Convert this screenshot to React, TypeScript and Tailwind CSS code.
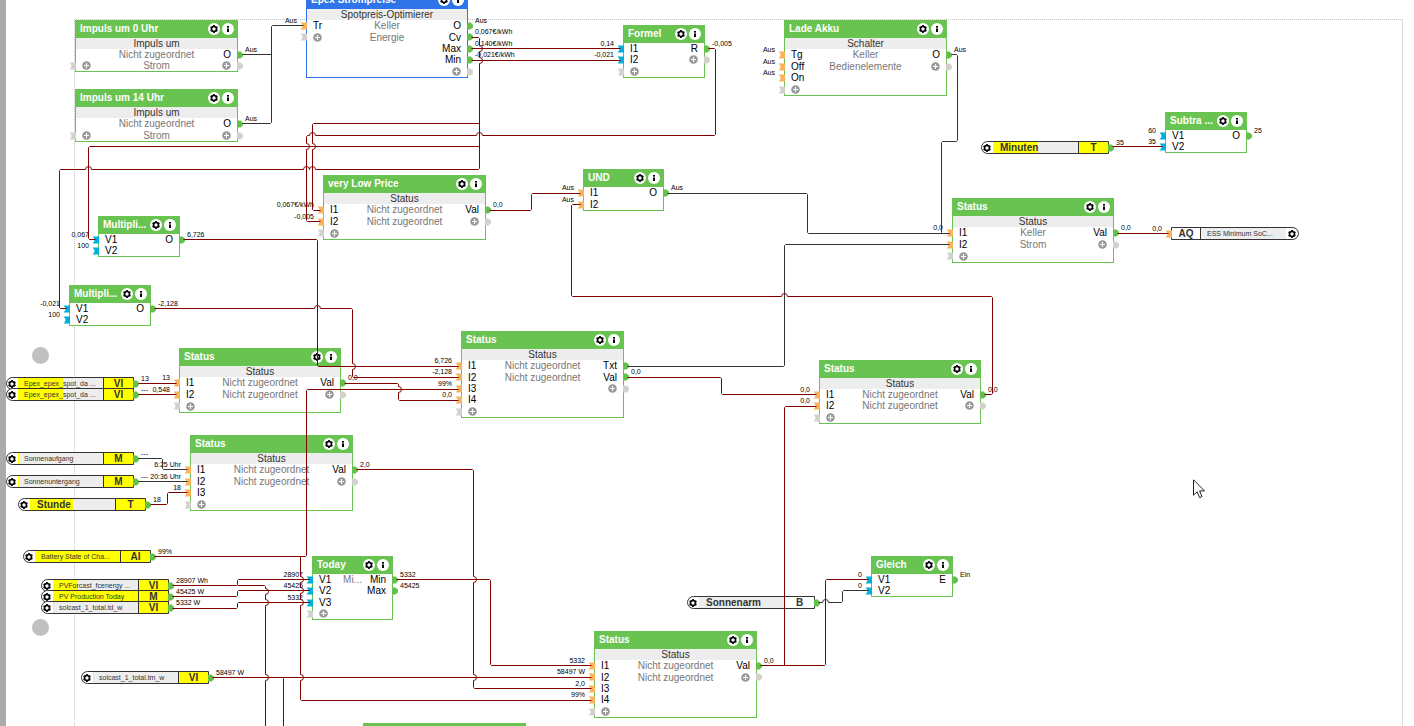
import React from "react";

type PortKind = "orange" | "cyan" | "gray";
type Input = { label?: string; kind: PortKind; value?: string };
type Output = { label?: string; value?: string };
type Row = { in?: Input; mid?: string; out?: Output };
type Block = {
  x: number;
  y: number;
  w: number;
  h: number;
  title: string;
  type?: string;
  blue?: boolean;
  rows: Row[];
};
type Tag = {
  x: number;
  y: number;
  name: string;
  code: string;
  fill?: number;
  small?: boolean;
  plain?: boolean;
  value?: string;
};
type Point = [number, number];
type Wire = { points: Point[]; dark?: boolean; hops?: Point[] };

const o = (label: string, value?: string): Input => ({ label, kind: "orange", value });
const c = (label: string, value?: string): Input => ({ label, kind: "cyan", value });
const add: Input = { kind: "gray" };
const out = (label: string, value?: string): Output => ({ label, value });
const addOut: Output = {};
const NONE = "Nicht zugeordnet";

const blocks: Block[] = [
  { x: 75, y: 20, w: 163, h: 52, title: "Impuls um 0 Uhr", type: "Impuls um", rows: [{ mid: NONE, out: out("O", "Aus") }, { in: add, mid: "Strom", out: addOut }] },
  { x: 75, y: 89, w: 163, h: 53, title: "Impuls um 14 Uhr", type: "Impuls um", rows: [{ mid: NONE, out: out("O", "Aus") }, { in: add, mid: "Strom", out: addOut }] },
  {
    x: 306, y: -9, w: 162, h: 87, title: "Epex Strompreise", type: "Spotpreis-Optimierer", blue: true,
    rows: [
      { in: o("Tr", "Aus"), mid: "Keller", out: out("O", "Aus") },
      { in: add, mid: "Energie", out: out("Cv", "0,067€/kWh") },
      { out: out("Max", "0,140€/kWh") },
      { out: out("Min", "-0,021€/kWh") },
      { out: addOut },
    ],
  },
  { x: 623, y: 25, w: 82, h: 53, title: "Formel", rows: [{ in: c("I1", "0,14"), out: out("R", "-0,005") }, { in: c("I2", "-0,021"), out: addOut }, { in: add }] },
  {
    x: 784, y: 20, w: 163, h: 76, title: "Lade Akku", type: "Schalter",
    rows: [{ in: o("Tg", "Aus"), mid: "Keller", out: out("O", "Aus") }, { in: o("Off", "Aus"), mid: "Bedienelemente", out: addOut }, { in: o("On", "Aus") }, { in: add }],
  },
  { x: 1165, y: 112, w: 82, h: 41, title: "Subtra ...", rows: [{ in: c("V1", "60"), out: out("O", "25") }, { in: c("V2", "35") }] },
  { x: 952, y: 198, w: 162, h: 65, title: "Status", type: "Status", rows: [{ in: o("I1", "0,0"), mid: "Keller", out: out("Val", "0,0") }, { in: o("I2"), mid: "Strom", out: addOut }, { in: add }] },
  { x: 323, y: 175, w: 163, h: 65, title: "very Low Price", type: "Status", rows: [{ in: o("I1", "0,067€/kWh"), mid: NONE, out: out("Val", "0,0") }, { in: o("I2", "-0,005"), mid: NONE, out: addOut }, { in: add }] },
  { x: 583, y: 169, w: 81, h: 42, title: "UND", rows: [{ in: o("I1", "Aus"), out: out("O", "Aus") }, { in: o("I2", "Aus") }] },
  { x: 98, y: 216, w: 82, h: 41, title: "Multipli...", rows: [{ in: c("V1", "0,067"), out: out("O", "6,726") }, { in: c("V2", "100") }] },
  { x: 69, y: 285, w: 82, h: 41, title: "Multipli...", rows: [{ in: c("V1", "-0,021"), out: out("O", "-2,128") }, { in: c("V2", "100") }] },
  { x: 179, y: 348, w: 162, h: 65, title: "Status", type: "Status", rows: [{ in: o("I1", "13"), mid: NONE, out: out("Val", "0,0") }, { in: o("I2", "0,548"), mid: NONE, out: addOut }, { in: add }] },
  {
    x: 461, y: 331, w: 163, h: 87, title: "Status", type: "Status",
    rows: [{ in: o("I1", "6,726"), mid: NONE, out: out("Txt") }, { in: o("I2", "-2,128"), mid: NONE, out: out("Val", "0,0") }, { in: o("I3", "99%"), out: addOut }, { in: o("I4", "0,0") }, { in: add }],
  },
  { x: 819, y: 360, w: 162, h: 64, title: "Status", type: "Status", rows: [{ in: o("I1", "0,0"), mid: NONE, out: out("Val", "0,0") }, { in: o("I2", "0,0"), mid: NONE, out: addOut }, { in: add }] },
  {
    x: 190, y: 435, w: 163, h: 76, title: "Status", type: "Status",
    rows: [{ in: o("I1", "6:25 Uhr"), mid: NONE, out: out("Val", "2,0") }, { in: o("I2", "20:36 Uhr"), mid: NONE, out: addOut }, { in: o("I3", "18") }, { in: add }],
  },
  { x: 312, y: 556, w: 81, h: 64, title: "Today", rows: [{ in: c("V1", "28907"), mid: "Mi...", out: out("Min", "5332") }, { in: c("V2", "45425"), out: out("Max", "45425") }, { in: c("V3", "5332") }, { in: add }] },
  { x: 871, y: 556, w: 82, h: 41, title: "Gleich", rows: [{ in: c("V1", "0"), out: out("E", "Ein") }, { in: c("V2", "0") }] },
  {
    x: 594, y: 631, w: 163, h: 87, title: "Status", type: "Status",
    rows: [{ in: o("I1", "5332"), mid: NONE, out: out("Val", "0,0") }, { in: o("I2", "58497 W"), mid: NONE, out: addOut }, { in: o("I3", "2,0") }, { in: o("I4", "99%") }, { in: add }],
  },
  { x: 363, y: 723, w: 163, h: 52, title: "", rows: [] },
];

const tags: Tag[] = [
  { x: 6, y: 377, name: "Epex_epex_spot_da ...", code: "VI", fill: 45, small: true, value: "13" },
  { x: 6, y: 388, name: "Epex_epex_spot_da ...", code: "VI", fill: 45, small: true, value: "---" },
  { x: 6, y: 452, name: "Sonnenaufgang", code: "M", fill: 1, small: true, value: "---" },
  { x: 6, y: 475, name: "Sonnenuntergang", code: "M", fill: 1, small: true, value: "---" },
  { x: 18, y: 498, name: "Stunde", code: "T", fill: 43, value: "18" },
  { x: 23, y: 550, name: "Battery State of Cha...", code: "AI", fill: 86, small: true, value: "99%" },
  { x: 41, y: 579, name: "PVForcast_fcenergy ...", code: "VI", fill: 25, small: true, value: "28907 Wh" },
  { x: 41, y: 590, name: "PV Production Today", code: "M", fill: 86, small: true, value: "45425 W" },
  { x: 41, y: 601, name: "solcast_1_total.td_w", code: "VI", fill: 1, small: true, value: "5332 W" },
  { x: 81, y: 671, name: "solcast_1_total.tm_w", code: "VI", fill: 1, small: true, value: "58497 W" },
  { x: 981, y: 141, name: "Minuten", code: "T", fill: 45, value: "35" },
  { x: 687, y: 596, name: "Sonnenarm", code: "B", plain: true },
];

const wires: Wire[] = [
  { dark: true, points: [[242, 54], [271, 54]] },
  { dark: true, points: [[242, 123], [271, 123], [271, 25], [303, 25]] },
  { dark: true, points: [[951, 54], [957, 54], [957, 141], [941, 141], [941, 233], [949, 233]] },
  { dark: true, points: [[667, 193], [807, 193], [807, 233], [949, 233]] },
  { dark: true, points: [[627, 366], [784, 366], [784, 244], [949, 244]] },
  { dark: true, points: [[138, 458], [162, 458], [162, 469], [187, 469]] },
  { dark: true, points: [[138, 481], [187, 481]] },
  { dark: true, points: [[818, 602], [842, 602], [842, 590], [868, 590]], hops: [[825, 602]] },
  { points: [[471, 37], [479, 37], [479, 169], [59, 169], [59, 308], [66, 308]], hops: [[479, 48], [479, 60], [312, 169], [306, 169], [88, 169]] },
  { points: [[479, 123], [312, 123], [312, 210], [320, 210]], hops: [[312, 146]] },
  { points: [[479, 146], [88, 146], [88, 239], [95, 239]] },
  { points: [[471, 48], [620, 48]] },
  { points: [[471, 60], [620, 60]] },
  { points: [[708, 48], [715, 48], [715, 135], [306, 135], [306, 221], [320, 221]], hops: [[479, 135], [312, 135], [306, 146]] },
  { points: [[183, 239], [317, 239], [317, 366], [458, 366]] },
  { points: [[154, 308], [352, 308], [352, 377], [458, 377]], hops: [[317, 308], [352, 366]] },
  { points: [[344, 383], [398, 383], [398, 400], [458, 400]], hops: [[398, 389]] },
  { points: [[154, 556], [306, 556], [306, 389], [458, 389]] },
  { points: [[300, 556], [300, 700], [591, 700]], hops: [[300, 579], [300, 590], [300, 602], [300, 677]] },
  { points: [[138, 383], [176, 383]] },
  { points: [[138, 394], [176, 394]] },
  { points: [[150, 504], [167, 504], [167, 492], [187, 492]] },
  { points: [[489, 210], [531, 210], [531, 193], [580, 193]] },
  { points: [[580, 204], [571, 204], [571, 296], [992, 296], [992, 394], [984, 394]], hops: [[784, 296]] },
  { points: [[627, 377], [721, 377], [721, 394], [816, 394]] },
  { points: [[816, 406], [784, 406], [784, 665]] },
  { points: [[760, 665], [825, 665], [825, 579], [868, 579]] },
  { points: [[356, 469], [473, 469], [473, 688], [591, 688]], hops: [[473, 579], [473, 677]] },
  { points: [[396, 579], [490, 579], [490, 665], [591, 665]] },
  { points: [[212, 677], [591, 677]] },
  { points: [[275, 677], [283, 677], [283, 780]] },
  { points: [[172, 585], [237, 585], [237, 579], [309, 579]] },
  { points: [[237, 585], [265, 585], [265, 780]], hops: [[265, 591], [265, 602], [265, 677]] },
  { points: [[172, 596], [237, 596], [237, 590], [309, 590]] },
  { points: [[172, 608], [237, 608], [237, 602], [309, 602]] },
  { points: [[1112, 146], [1162, 146]] },
  { points: [[1117, 233], [1168, 233]] },
];

/* Builds a path with chamfered corners and small arcs where it jumps another wire. */
function wirePath({ points, hops = [] }: Wire): string {
  const d: string[] = [`M${points[0][0]} ${points[0][1]}`];
  for (let i = 0; i < points.length - 1; i++) {
    const [ax, ay] = points[i];
    const [bx, by] = points[i + 1];
    const dx = Math.sign(bx - ax);
    const dy = Math.sign(by - ay);
    if (i > 0) d.push(`L${ax + dx} ${ay + dy}`);
    const onSegment = hops
      .filter(([hx, hy]) =>
        dx !== 0
          ? hy === ay && (hx - ax) * dx > 0 && (bx - hx) * dx > 0
          : hx === ax && (hy - ay) * dy > 0 && (by - hy) * dy > 0
      )
      .sort((p, q) => (p[0] - q[0]) * dx + (p[1] - q[1]) * dy);
    const sweep = dx > 0 || dy > 0 ? 1 : 0;
    for (const [hx, hy] of onSegment) {
      d.push(`L${hx - dx * 3} ${hy - dy * 3}`);
      d.push(`A3 3 0 0 ${sweep} ${hx + dx * 3} ${hy + dy * 3}`);
    }
    const trim = i < points.length - 2 ? 1 : 0;
    d.push(`L${bx - dx * trim} ${by - dy * trim}`);
  }
  return d.join("");
}

function Gear() {
  return (
    <svg viewBox="0 0 12 12" className="block size-3" aria-hidden="true">
      <g stroke="#000" fill="none">
        <circle cx="6" cy="6" r="2.5" strokeWidth="1.6" />
        <path d="M6 2.1v1.2M6 8.7v1.2M2.6 4.05l1.1.6M8.3 7.35l1.1.6M2.6 7.95l1.1-.6M8.3 4.65l1.1-.6" strokeWidth="1.7" />
      </g>
    </svg>
  );
}

function Info() {
  return (
    <svg viewBox="0 0 12 12" className="block size-3" aria-hidden="true">
      <rect x="5" y="3" width="2" height="1.6" fill="#000" />
      <rect x="5" y="5.4" width="2" height="3.6" fill="#000" />
    </svg>
  );
}

function Plus() {
  return (
    <svg viewBox="0 0 9 9" className="block size-[9px]" aria-hidden="true">
      <circle cx="4.5" cy="4.5" r="4.3" fill="#999" />
      <path d="M4.5 2v5M2 4.5h5" stroke="#fff" strokeWidth="1.1" />
    </svg>
  );
}

const portFill: Record<PortKind, string> = { orange: "#f9b35a", cyan: "#00b0dc", gray: "#d3d1cc" };

function InPort({ kind }: { kind: PortKind }) {
  return (
    <svg viewBox="0 0 7 8" className="absolute right-full top-[2px] h-2 w-[7px]" aria-hidden="true">
      <path d="M0.6 0.4H7V7.6H0.6L2.4 5V3Z" fill={portFill[kind]} />
    </svg>
  );
}

function OutPort({ muted }: { muted?: boolean }) {
  return (
    <svg viewBox="0 0 6 8" className="absolute left-full top-[2px] h-2 w-[6px]" aria-hidden="true">
      <path d="M0 0.5H3.6L6 2.8V5.2L3.6 7.5H0Z" fill={muted ? "#d3d1cc" : "#62c04b"} />
    </svg>
  );
}

function Value({ children, side }: { children: string; side: "in" | "out" }) {
  return (
    <span
      className={
        side === "in"
          ? "absolute right-full -top-[3px] mr-[10px] whitespace-nowrap text-[7px] leading-[8px] text-black"
          : "absolute left-full -top-[3px] ml-2 whitespace-nowrap text-[7px] leading-[8px] text-black"
      }
    >
      {children}
    </span>
  );
}

function BlockRow({ row }: { row: Row }) {
  return (
    <div className="relative grid min-h-0 flex-1 grid-cols-[1fr_auto_1fr] items-center px-[6px] leading-[11px]">
      <span className="flex text-black">{row.in && (row.in.label ?? <Plus />)}</span>
      <span className="whitespace-nowrap text-[#777]">{row.mid}</span>
      <span className="flex justify-end text-black">{row.out && (row.out.label ?? <Plus />)}</span>
      {row.in && <InPort kind={row.in.kind} />}
      {row.in?.value && <Value side="in">{row.in.value}</Value>}
      {row.out && <OutPort muted={!row.out.label} />}
      {row.out?.value && <Value side="out">{row.out.value}</Value>}
    </div>
  );
}

function BlockCard({ block }: { block: Block }) {
  const { x, y, w, h, title, type, blue, rows } = block;
  return (
    <section
      className={`absolute flex flex-col border bg-white text-[10px] ${blue ? "border-[#2f74e8]" : "border-[#69c350]"}`}
      style={{ left: x, top: y, width: w, height: h }}
    >
      <header className={`flex h-[17px] shrink-0 items-center justify-between pb-px pl-1 pr-[3px] ${blue ? "bg-[#2f74e8]" : "bg-[#69c350]"}`}>
        <h2 className="whitespace-nowrap pb-px font-bold leading-3 text-white">{title}</h2>
        <div className="flex shrink-0 gap-[2px]">
          <button type="button" aria-label="Einstellungen" className="size-3 rounded-full bg-white">
            <Gear />
          </button>
          <button type="button" aria-label="Info" className="size-3 rounded-full bg-white">
            <Info />
          </button>
        </div>
      </header>
      {type && <p className="h-[11px] shrink-0 bg-[#ededed] text-center leading-[11px] text-[#333]">{type}</p>}
      <div className="flex min-h-0 flex-1 flex-col">
        {rows.map((row, i) => (
          <BlockRow key={i} row={row} />
        ))}
      </div>
    </section>
  );
}

function TagPill({ tag }: { tag: Tag }) {
  return (
    <div
      className="absolute flex h-[13px] w-32 rounded-l-full border border-[#333] bg-white text-[#333]"
      style={{ left: tag.x, top: tag.y }}
    >
      <button type="button" aria-label="Einstellungen" className="-ml-px w-3 shrink-0">
        <Gear />
      </button>
      <div className="relative flex flex-1 items-center overflow-hidden bg-[#ededed]">
        <span className="absolute inset-y-0 left-0 bg-[#ffff00]" style={{ width: tag.fill ?? 0 }} />
        <span className={`relative whitespace-nowrap leading-[11px] ${tag.small ? "pl-[6px] text-[7px]" : "pl-[7px] text-[10px] font-bold"}`}>{tag.name}</span>
      </div>
      <span
        className={`w-[30px] shrink-0 border-l border-[#333] text-center text-[10px] font-bold leading-3 ${tag.plain ? "bg-white" : "bg-[#ffff00]"}`}
      >
        {tag.code}
      </span>
      <OutPort />
      {tag.value && <Value side="out">{tag.value}</Value>}
    </div>
  );
}

function OutputTag() {
  return (
    <div className="absolute left-[1171px] top-[227px] flex h-[13px] w-32 rounded-r-full border border-[#333] bg-white text-[#333]">
      <InPort kind="orange" />
      <Value side="in">0,0</Value>
      <span className="w-[29px] shrink-0 border-r border-[#333] text-center text-[10px] font-bold leading-3">AQ</span>
      <span className="flex-1 whitespace-nowrap bg-[#ededed] pl-[6px] text-[7px] leading-[11px]">ESS Minimum SoC...</span>
      <button type="button" aria-label="Einstellungen" className="w-3 shrink-0">
        <Gear />
      </button>
    </div>
  );
}

export default function App() {
  return (
    <main className="relative flex h-screen w-full overflow-hidden bg-white font-['Liberation_Sans',Arial,sans-serif]">
      <div className="w-[6px] shrink-0 bg-[#ababab]" />
      <div className="flex-1 pl-[68px] pr-[11px] pt-[19px]">
        <div className="h-full border-l border-r border-t border-dotted border-[#c4c4c4] border-r-[#dcdcdc] [border-right-style:solid]" />
      </div>

      <span className="absolute left-8 top-[347px] size-[17px] rounded-full bg-[#c0c0c0]" />
      <span className="absolute left-8 top-[619px] size-[17px] rounded-full bg-[#c0c0c0]" />

      {blocks.map((block, i) => (
        <BlockCard key={i} block={block} />
      ))}
      {tags.map((tag, i) => (
        <TagPill key={i} tag={tag} />
      ))}
      <OutputTag />

      <svg className="pointer-events-none absolute inset-0 size-full" aria-hidden="true">
        <g transform="translate(.5 .5)" fill="none" strokeWidth="1">
          {wires.map((wire, i) => (
            <path key={i} d={wirePath(wire)} stroke={wire.dark ? "#333" : "#800000"} />
          ))}
        </g>
      </svg>

      <svg viewBox="0 0 12 20" className="pointer-events-none absolute left-[1193px] top-[479px] h-5 w-3" aria-hidden="true">
        <path d="M.5 .8V16.2L4.1 12.8L6.6 18.6L9 17.6L6.6 11.9H11.5Z" fill="#fff" stroke="#222" strokeWidth="1" />
      </svg>
    </main>
  );
}
